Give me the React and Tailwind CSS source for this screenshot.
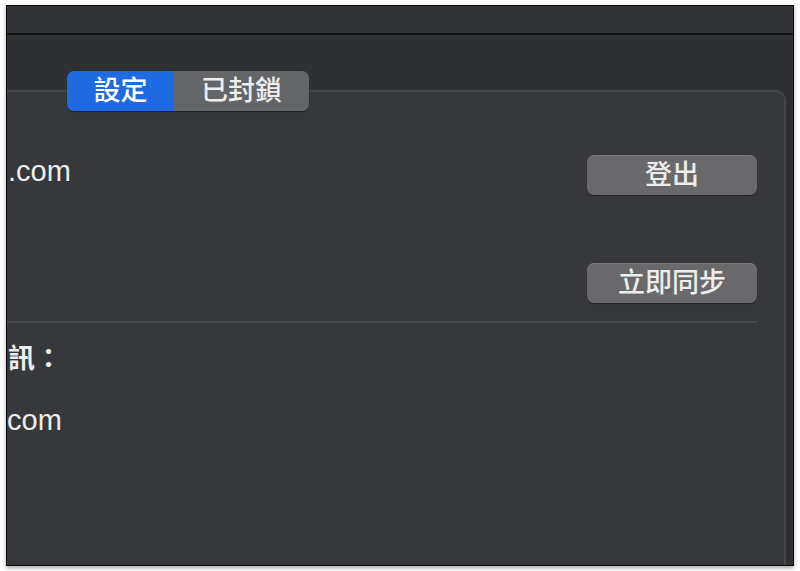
import React from 'react';

const font = { fontFamily: '"Liberation Sans", "Noto Sans CJK TC", sans-serif' };

function Button({ label }) {
    return (
        <button className="w-[170px] h-[40px] rounded-[7px] bg-[#69696b] border-t border-[#7a7a7c] text-[27px] font-medium leading-none text-[#ededed] shadow-[0_1px_1px_rgba(0,0,0,0.4)]">
            {label}
        </button>
    );
}

export default function App() {
    return (
        <div className="w-[800px] h-[571px] bg-white pt-[5px] pl-[6px]" style={font}>
            <div className="w-[788px] h-[561px] border border-[#0c0c0c] bg-[#2e3033] flex flex-col overflow-hidden shadow-[0_2px_4px_rgba(0,0,0,0.35)]">
                <div className="h-[29px] bg-[#323336] border-b-2 border-[#111213] shrink-0" />
                <div className="flex-1 flex pr-[7px] pt-[55px]">
                    <div className="flex-1 bg-[#36383b] border-t-2 border-r-2 border-[#46474a] rounded-tr-[10px] flex flex-col pr-[27px]">
                        <div className="-mt-[21px] ml-[60px] flex w-[242px] h-[40px] rounded-[7px] overflow-hidden text-[27px] font-medium leading-none shadow-[0_1px_1px_rgba(0,0,0,0.4)]">
                            <div className="w-[107px] bg-[#1e6ae0] text-white flex items-center justify-center">設定</div>
                            <div className="flex-1 bg-[#646567] text-[#ededed] flex items-center justify-center">已封鎖</div>
                        </div>
                        <div className="mt-[44px] flex items-center justify-between h-[40px]">
                            <span className="pl-[1px] -mt-[7px] text-[29px] text-[#ededed]">.com</span>
                            <Button label="登出" />
                        </div>
                        <div className="mt-[68px] flex justify-end">
                            <Button label="立即同步" />
                        </div>
                        <div className="mt-[18px] h-[2px] bg-[#47484b]" />
                        <div className="mt-[21px] text-[27px] leading-[30px] font-bold text-[#ededed] pl-[1px]">訊：</div>
                        <div className="mt-[31px] text-[29px] leading-[30px] text-[#ededed]">com</div>
                    </div>
                </div>
            </div>
        </div>
    );
}
